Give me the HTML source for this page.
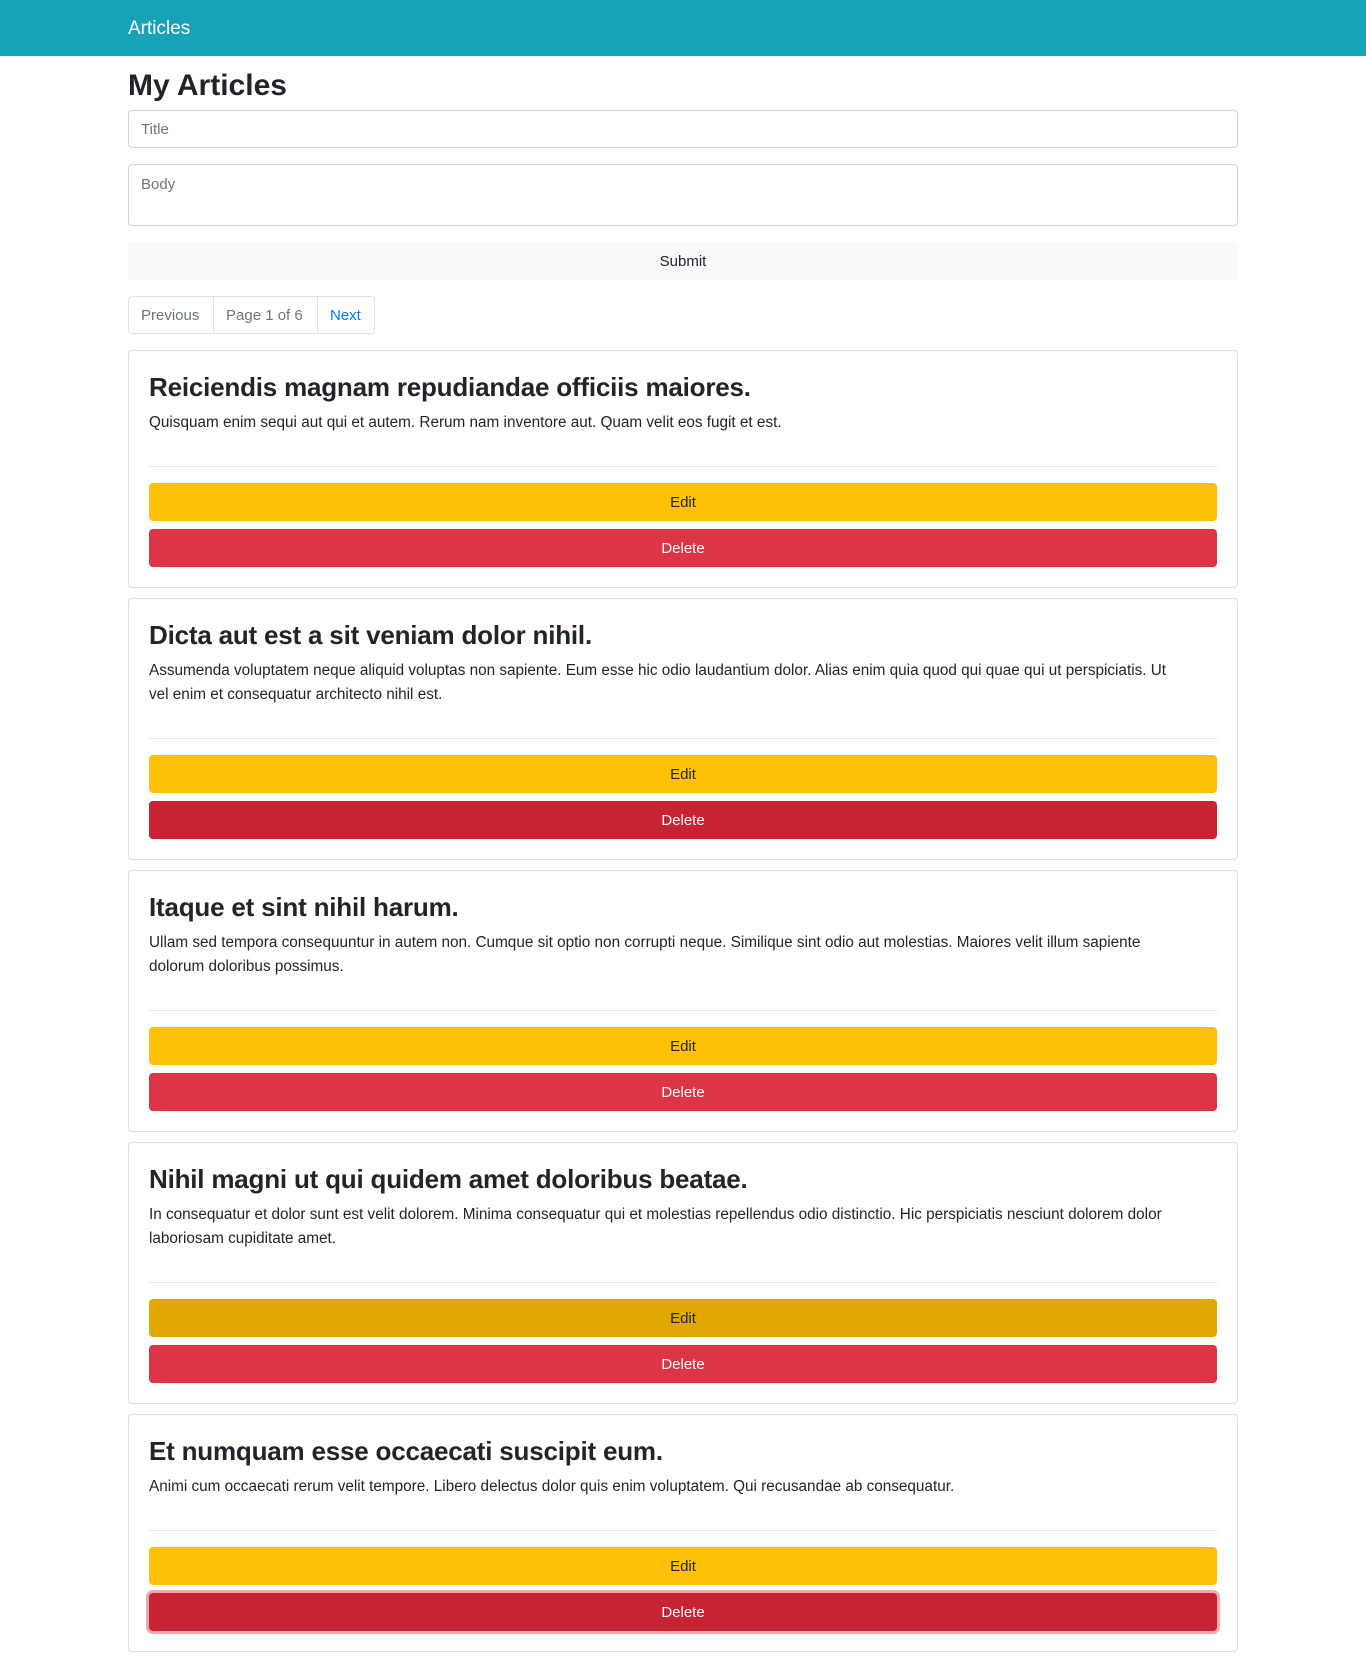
<!DOCTYPE html>
<html><head><meta charset="utf-8"><style>
*{box-sizing:border-box}
body{margin:0;font-family:"Liberation Sans",sans-serif;color:#212529;font-size:15px;background:#fff}
.nav{height:56px;background:#17a2b8;color:#fff;font-size:19px;padding-left:128px;line-height:58px}
.c{width:1110px;margin-left:128px}
h1{font-size:30px;font-weight:700;margin:10px 0 8px;height:36px;line-height:40px}
.in{border:1px solid #ced4da;border-radius:4px;height:38px;padding:0 12px;color:#6c757d;line-height:38px;font-size:15px}
.ta{height:62px;margin-top:16px;line-height:1.5;padding-top:9px}
.sub{margin-top:16px;height:38px;background:#f8f9fa;border-radius:4px;text-align:center;line-height:40px}
.pg{margin-top:16px;display:flex;height:38px}
.pg div{border:1px solid #dee2e6;line-height:38px;padding:0 12px;margin-left:-1px;color:#6c757d}
.pg div:first-child{margin-left:0;border-radius:4px 0 0 4px;width:86px}
.pg div:last-child{border-radius:0 4px 4px 0;color:#007bff;width:58px}
.pg div:nth-child(2){width:105px}
.card{border:1px solid #dfdfdf;border-radius:4px;padding:20px;margin-top:16px}
.card+.card{margin-top:10px}
h3{font-size:26px;font-weight:700;margin:0 0 8px;line-height:32px;letter-spacing:-0.2px}
p{margin:0;padding-bottom:16px;line-height:24px;white-space:nowrap;font-size:15.3px}
hr{border:0;border-top:1px solid #e5e5e5;margin:15px 0 16px}
.b{height:38px;border-radius:4px;text-align:center;line-height:40px}
.e{background:#ffc107}.ed{background:#e0a800}
.d{background:#dc3545;color:#fff;margin-top:8px}.dd{background:#c82333}
.f{box-shadow:0 0 0 3px rgba(225,83,97,.5)}
</style></head><body>
<div class="nav">Articles</div>
<div class="c">
<h1>My Articles</h1>
<div class="in" style="margin-top:8px">Title</div>
<div class="in ta">Body</div>
<div class="sub">Submit</div>
<div class="pg"><div>Previous</div><div>Page 1 of 6</div><div>Next</div></div>
<div class="card"><h3>Reiciendis magnam repudiandae officiis maiores.</h3><p>Quisquam enim sequi aut qui et autem. Rerum nam inventore aut. Quam velit eos fugit et est.</p><hr><div class="b e">Edit</div><div class="b d">Delete</div></div>
<div class="card"><h3>Dicta aut est a sit veniam dolor nihil.</h3><p>Assumenda voluptatem neque aliquid voluptas non sapiente. Eum esse hic odio laudantium dolor. Alias enim quia quod qui quae qui ut perspiciatis. Ut<br>vel enim et consequatur architecto nihil est.</p><hr><div class="b e">Edit</div><div class="b d dd">Delete</div></div>
<div class="card"><h3>Itaque et sint nihil harum.</h3><p>Ullam sed tempora consequuntur in autem non. Cumque sit optio non corrupti neque. Similique sint odio aut molestias. Maiores velit illum sapiente<br>dolorum doloribus possimus.</p><hr><div class="b e">Edit</div><div class="b d">Delete</div></div>
<div class="card"><h3>Nihil magni ut qui quidem amet doloribus beatae.</h3><p>In consequatur et dolor sunt est velit dolorem. Minima consequatur qui et molestias repellendus odio distinctio. Hic perspiciatis nesciunt dolorem dolor<br>laboriosam cupiditate amet.</p><hr><div class="b e ed">Edit</div><div class="b d">Delete</div></div>
<div class="card"><h3>Et numquam esse occaecati suscipit eum.</h3><p>Animi cum occaecati rerum velit tempore. Libero delectus dolor quis enim voluptatem. Qui recusandae ab consequatur.</p><hr><div class="b e">Edit</div><div class="b d dd f">Delete</div></div>
</div>
</body></html>
